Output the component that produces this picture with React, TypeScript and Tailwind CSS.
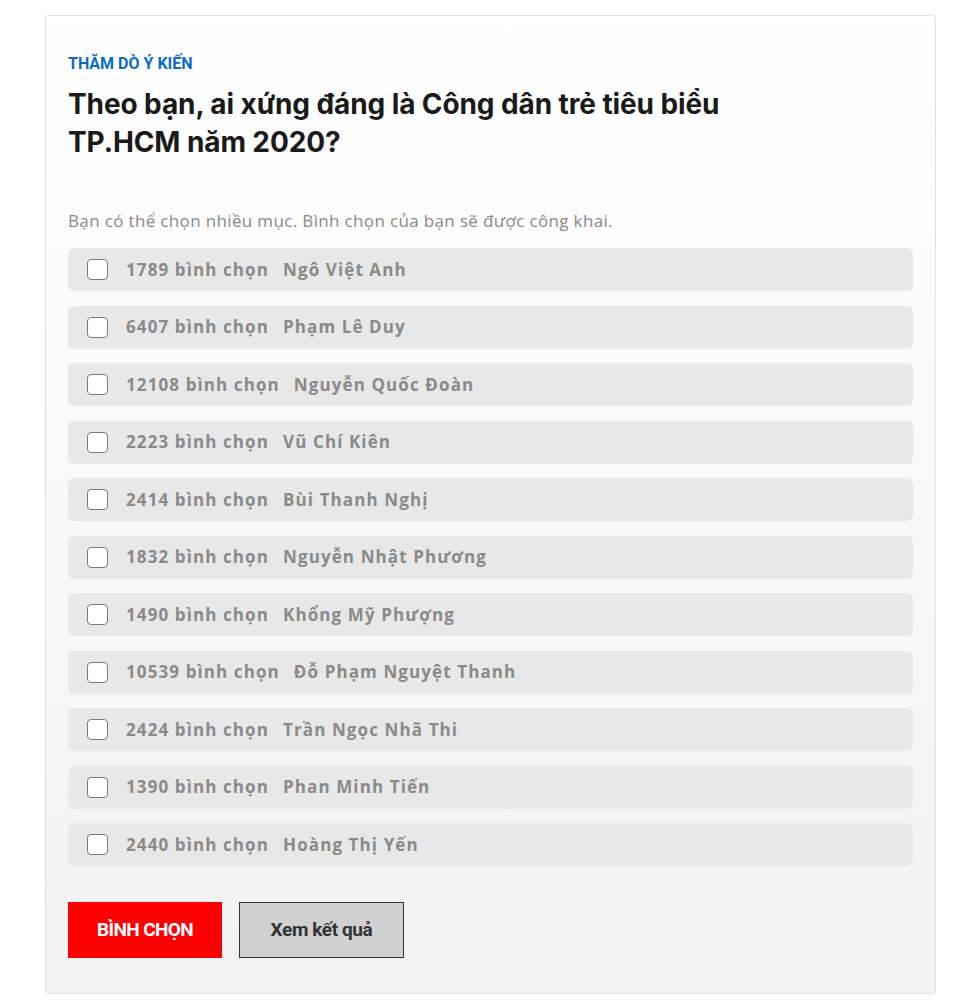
import { useState } from "react";

const options = [
  { votes: 1789, name: "Ngô Việt Anh" },
  { votes: 6407, name: "Phạm Lê Duy" },
  { votes: 12108, name: "Nguyễn Quốc Đoàn" },
  { votes: 2223, name: "Vũ Chí Kiên" },
  { votes: 2414, name: "Bùi Thanh Nghị" },
  { votes: 1832, name: "Nguyễn Nhật Phương" },
  { votes: 1490, name: "Khổng Mỹ Phượng" },
  { votes: 10539, name: "Đỗ Phạm Nguyệt Thanh" },
  { votes: 2424, name: "Trần Ngọc Nhã Thi" },
  { votes: 1390, name: "Phan Minh Tiến" },
  { votes: 2440, name: "Hoàng Thị Yến" },
];

const App = () => {
  const [checked, setChecked] = useState<number[]>([]);

  const toggle = (i: number) => {
    setChecked((c) => (c.includes(i) ? c.filter((x) => x !== i) : [...c, i]));
  };

  return (
    <div className="min-h-screen bg-white pt-[15px] pl-[45px] pr-[44px] pb-2">
      <div className="rounded-[4px] border border-[#e2e2e2] bg-gradient-to-b from-white to-[#f2f2f2] px-[22px] pt-[38px] pb-[35px]">
        <div className="font-['Roboto',sans-serif] text-[16px] font-bold leading-[20px] tracking-[0px] text-[#0a6cc4]">
          THĂM DÒ Ý KIẾN
        </div>
        <h2 className="mt-[11px] max-w-[680px] font-['Inter',sans-serif] text-[28px] font-bold leading-[38px] tracking-[-0.1px] text-[#1a1a1a]">
          Theo bạn, ai xứng đáng là Công dân trẻ tiêu biểu TP.HCM năm 2020?
        </h2>
        <p className="mt-[48px] font-['Open_Sans',sans-serif] text-[17px] leading-[24px] tracking-[0.35px] text-[#8a8a8a]">
          Bạn có thể chọn nhiều mục. Bình chọn của bạn sẽ được công khai.
        </p>
        <div className="mt-[15px] flex flex-col gap-[14.5px]">
          {options.map((o, i) => (
            <label
              key={o.name}
              className="flex h-[43px] cursor-pointer items-center rounded-[6px] bg-[#e8e8e8] pl-[19px]"
            >
              <input
                type="checkbox"
                checked={checked.includes(i)}
                onChange={() => toggle(i)}
                className="sr-only"
              />
              <span className="flex h-[21px] w-[21px] items-center justify-center rounded-[4px] border-[1.5px] border-[#7a7a7a] bg-white text-[13px] text-[#555]">
                {checked.includes(i) ? "✓" : ""}
              </span>
              <span className="ml-[18px] font-['Open_Sans',sans-serif] text-[17px] font-bold tracking-[1.1px] text-[#8a8a8a]">
                {o.votes} bình chọn
                <span className="ml-[14px]">{o.name}</span>
              </span>
            </label>
          ))}
        </div>
        <div className="mt-[36px] flex gap-[17px]">
          <button
            type="button"
            className="h-[56px] w-[154px] bg-[#ff0000] font-['Roboto',sans-serif] text-[19px] font-bold tracking-[-0.6px] text-white"
          >
            BÌNH CHỌN
          </button>
          <button
            type="button"
            className="h-[56px] w-[165px] border border-[#333] bg-[#d1d1d1] font-['Roboto',sans-serif] text-[19px] font-bold tracking-[-0.4px] text-[#333]"
          >
            Xem kết quả
          </button>
        </div>
      </div>
    </div>
  );
};

export default App;
